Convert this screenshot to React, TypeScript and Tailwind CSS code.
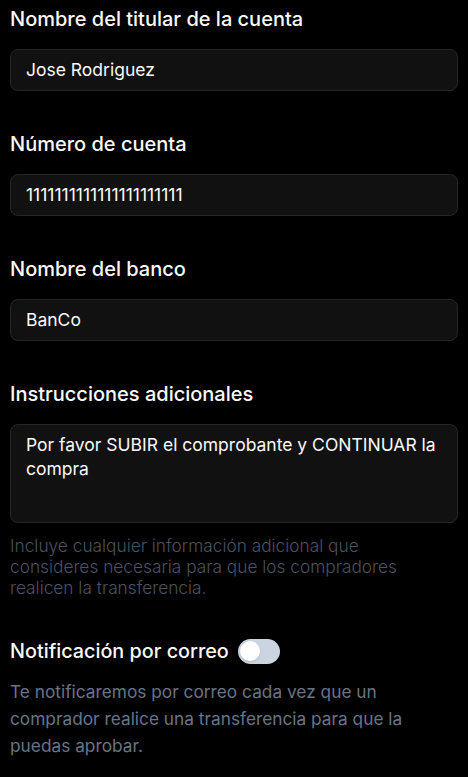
import { useState } from "react";

const fields = [
  { label: "Nombre del titular de la cuenta", value: "Jose Rodriguez" },
  { label: "Número de cuenta", value: "1111111111111111111111" },
  { label: "Nombre del banco", value: "BanCo" },
];

export default function App() {
  const [notify, setNotify] = useState(false);

  return (
    <div
      className="min-h-[777px] w-[468px] bg-black px-[10px] pt-[5px] text-[#fafafa]"
      style={{ fontFamily: "Inter, 'Noto Sans', sans-serif" }}
    >
      <div className="flex flex-col gap-[39px]">
        {fields.map((f) => (
          <div key={f.label} className="flex flex-col">
            <label className="text-[20px] font-medium leading-7">{f.label}</label>
            <input
              className="mt-4 w-full rounded-lg border border-[#262626] bg-[#111111] px-[15px] py-2 text-[17.5px] leading-6 text-[#fafafa] outline-none"
              defaultValue={f.value}
            />
          </div>
        ))}

        <div className="flex flex-col">
          <label className="text-[20px] font-medium leading-7">Instrucciones adicionales</label>
          <textarea
            className="mt-4 h-[99px] w-full resize-none rounded-lg border border-[#262626] bg-[#111111] px-[15px] py-2 text-[17.5px] leading-6 text-[#fafafa] outline-none"
            defaultValue="Por favor SUBIR el comprobante y CONTINUAR la compra"
          />
          <p className="mt-3 max-w-[425px] text-[17.3px] font-light leading-[21px] text-[#4b5261]">
            Incluye cualquier información adicional que consideres necesaria para que los compradores realicen la transferencia.
          </p>
        </div>
      </div>

      <div className="mt-[39px] flex flex-col">
        <div className="flex items-center gap-[9px]">
          <span className="text-[19.8px] font-medium leading-7">Notificación por correo</span>
          <button
            type="button"
            onClick={() => setNotify(!notify)}
            className={
              notify
                ? "flex h-[25px] w-[42px] items-center justify-end rounded-full bg-[#fafafa] p-[2.5px]"
                : "flex h-[25px] w-[42px] items-center justify-start rounded-full bg-[#cbd5e1] p-[2.5px]"
            }
          >
            <span
              className={
                notify
                  ? "h-5 w-5 rounded-full bg-black"
                  : "h-5 w-5 rounded-full bg-white shadow"
              }
            />
          </button>
        </div>
        <p className="mt-[13px] text-[17.3px] leading-[27px] text-[#687587]">
          Te notificaremos por correo cada vez que un comprador realice una transferencia para que la puedas aprobar.
        </p>
      </div>
    </div>
  );
}
